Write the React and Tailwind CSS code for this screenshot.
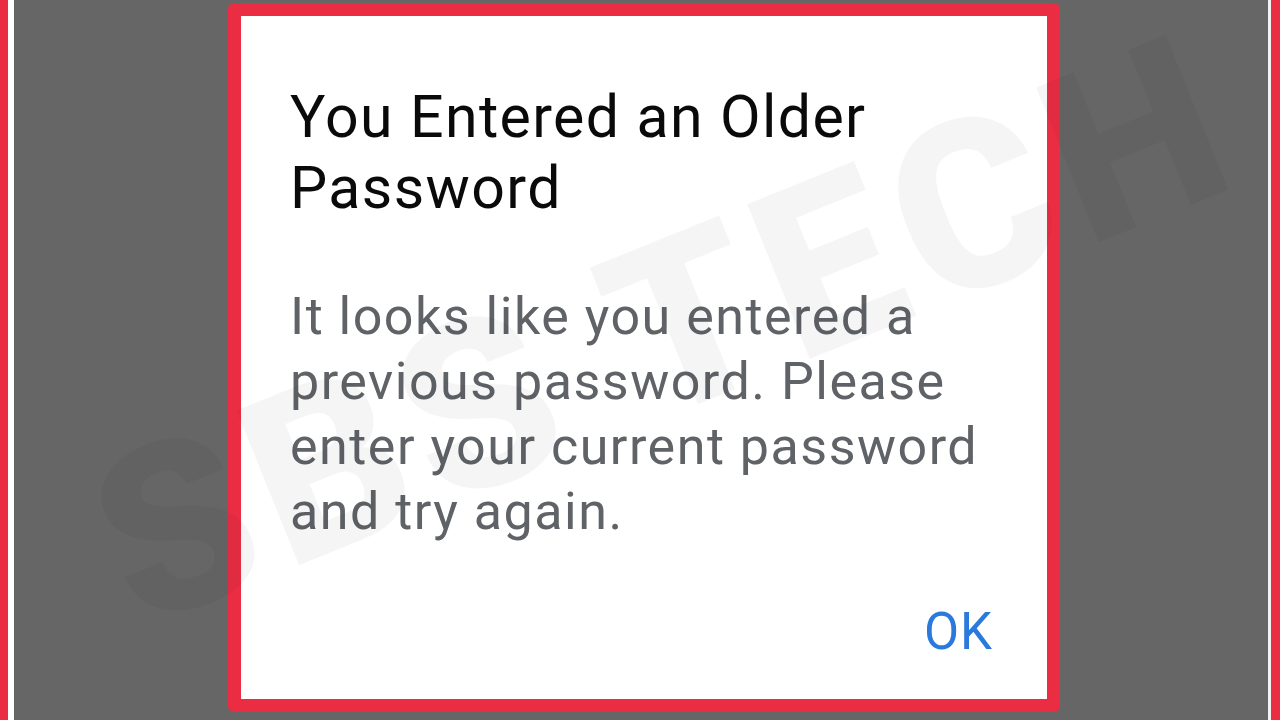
export default function App() {
  return (
    <div className="relative flex h-[720px] w-[1280px] overflow-hidden bg-[#666666] font-['Roboto','Liberation_Sans',sans-serif]">
      {/* side stripes */}
      <div className="w-[8px] bg-[#ea2d43]" />
      <div className="w-[6px] bg-white" />

      <div className="flex-1 pl-[214px] pt-[3px]">
        <div className="h-[709px] w-[832px] rounded-[6px] border-[13px] border-[#ea2d43] bg-white">
          <div className="flex h-full flex-col pl-[49px] pr-[54px] pt-[65px]">
            <h1 className="text-[59px] leading-[71px] tracking-[1.4px] text-[#0a0a0a]">
              You Entered an Older
              <br />
              Password
            </h1>
            <p className="mt-[61px] text-[52px] leading-[65px] tracking-[1.5px] text-[#5f6266]">
              It looks like you entered a
              <br />
              previous password. Please
              <br />
              enter your current password
              <br />
              and try again.
            </p>
            <div className="mt-[62px] flex justify-end">
              <span className="text-[51px] leading-[51px] tracking-[1px] text-[#2a7ade]">OK</span>
            </div>
          </div>
        </div>
      </div>

      <div className="w-[3px] bg-[#f2f2f2]" />
      <div className="w-[9px] bg-[#ea2d43]" />

      {/* watermark */}
      <div className="pointer-events-none absolute inset-0 flex items-center justify-center">
        <span className="translate-x-[25px] -translate-y-[30px] -rotate-[22deg] whitespace-nowrap text-[235px] font-black leading-none tracking-[13px] text-black/[0.04]">
          SBS TECH
        </span>
      </div>
    </div>
  )
}
